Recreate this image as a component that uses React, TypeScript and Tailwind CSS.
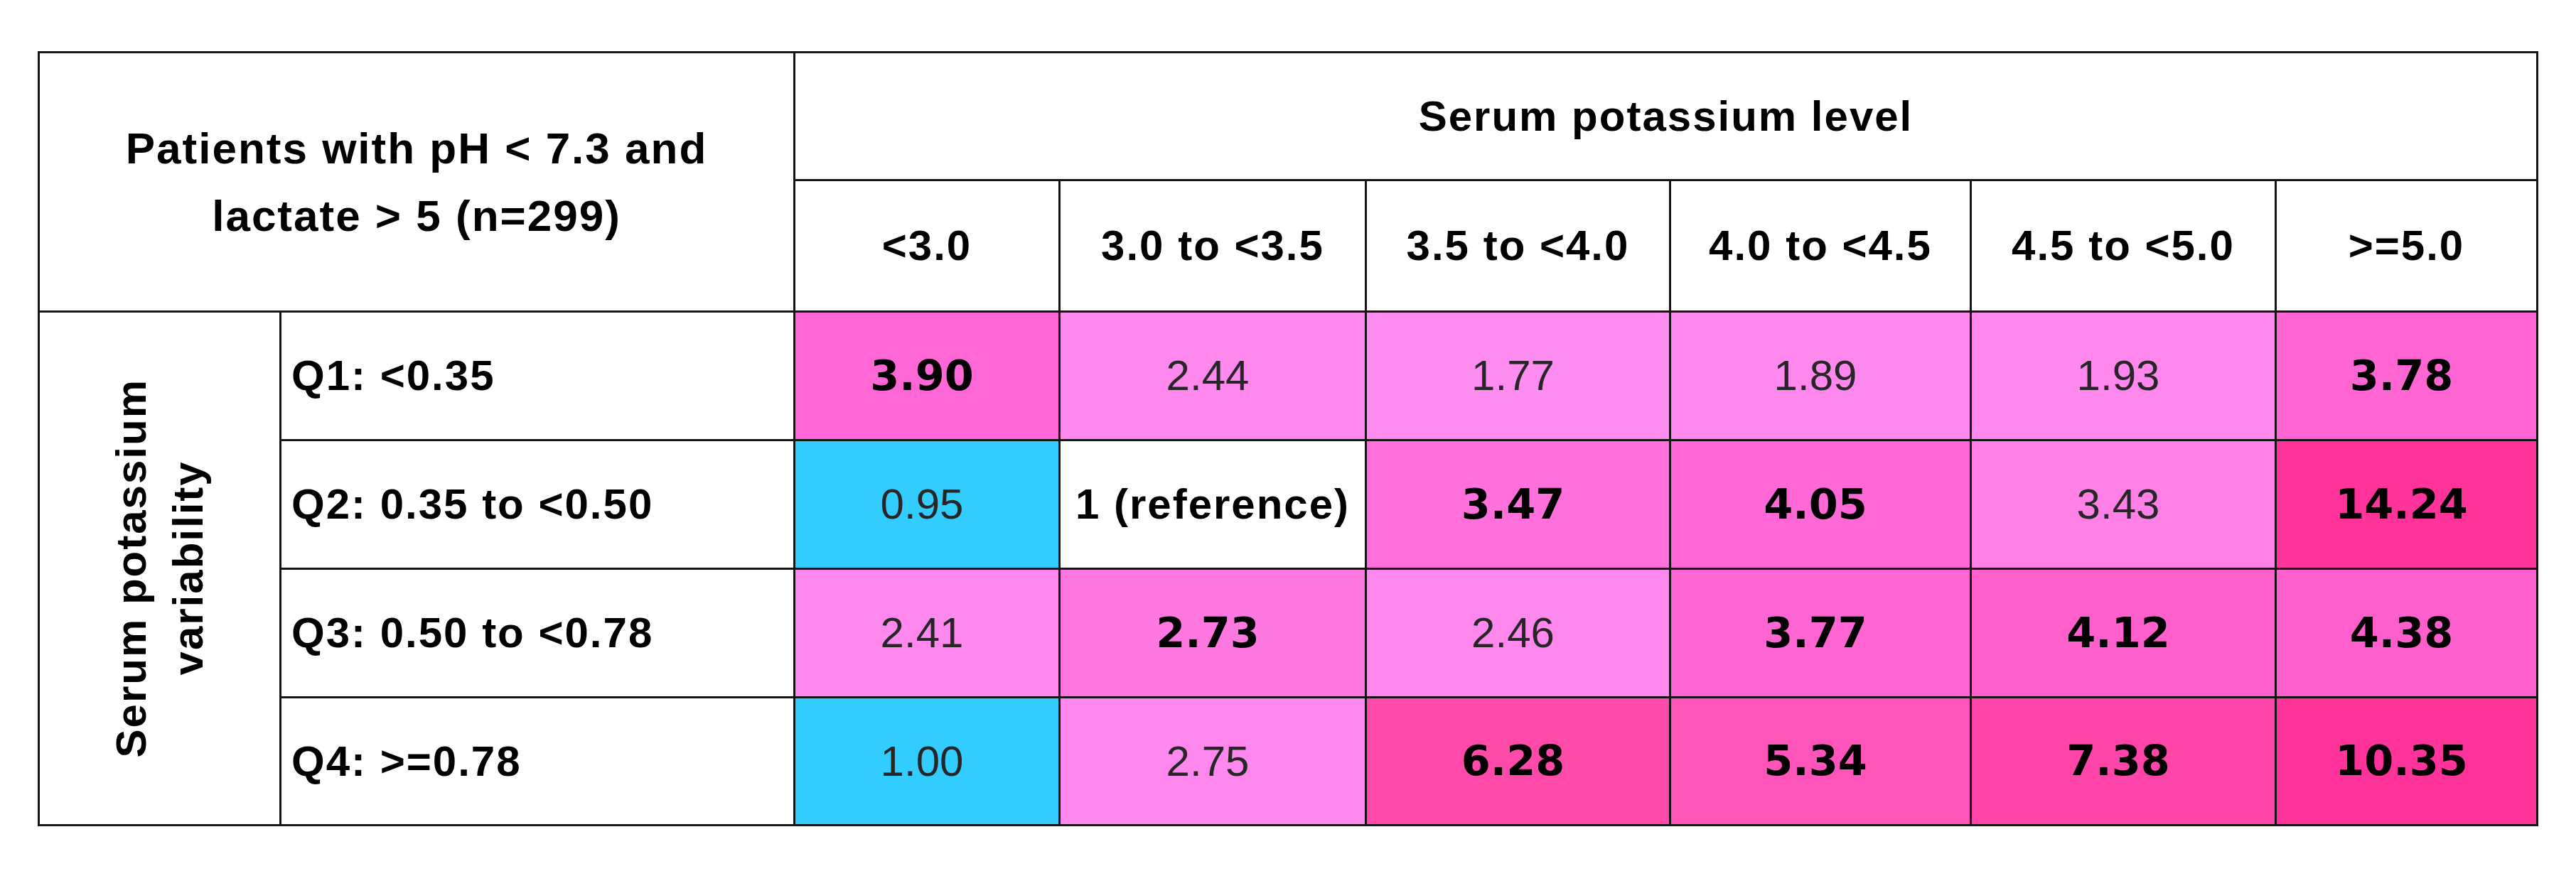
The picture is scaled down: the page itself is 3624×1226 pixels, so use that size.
/**
 * Odds ratio heat table: serum potassium level vs. potassium variability.
 */

type Cell = {
  value: string;
  bg: string;
  bold: boolean;
};

const levels = ["<3.0", "3.0 to <3.5", "3.5 to <4.0", "4.0 to <4.5", "4.5 to <5.0", ">=5.0"];

const rows: { label: string; cells: Cell[] }[] = [
  {
    label: "Q1: <0.35",
    cells: [
      { value: "3.90", bg: "bg-[#ff66d6]", bold: true },
      { value: "2.44", bg: "bg-[#ff88ee]", bold: false },
      { value: "1.77", bg: "bg-[#ff8cf0]", bold: false },
      { value: "1.89", bg: "bg-[#ff88ee]", bold: false },
      { value: "1.93", bg: "bg-[#ff88ee]", bold: false },
      { value: "3.78", bg: "bg-[#ff66d4]", bold: true },
    ],
  },
  {
    label: "Q2: 0.35 to <0.50",
    cells: [
      { value: "0.95", bg: "bg-[#33ccff]", bold: false },
      { value: "1 (reference)", bg: "bg-white", bold: true },
      { value: "3.47", bg: "bg-[#ff70dc]", bold: true },
      { value: "4.05", bg: "bg-[#ff68d6]", bold: true },
      { value: "3.43", bg: "bg-[#ff80e6]", bold: false },
      { value: "14.24", bg: "bg-[#ff3399]", bold: true },
    ],
  },
  {
    label: "Q3: 0.50 to <0.78",
    cells: [
      { value: "2.41", bg: "bg-[#ff88ee]", bold: false },
      { value: "2.73", bg: "bg-[#ff78e2]", bold: true },
      { value: "2.46", bg: "bg-[#ff88ee]", bold: false },
      { value: "3.77", bg: "bg-[#ff66d4]", bold: true },
      { value: "4.12", bg: "bg-[#ff60cc]", bold: true },
      { value: "4.38", bg: "bg-[#ff5fcc]", bold: true },
    ],
  },
  {
    label: "Q4: >=0.78",
    cells: [
      { value: "1.00", bg: "bg-[#33ccff]", bold: false },
      { value: "2.75", bg: "bg-[#ff88ee]", bold: false },
      { value: "6.28", bg: "bg-[#ff4aaa]", bold: true },
      { value: "5.34", bg: "bg-[#ff55bb]", bold: true },
      { value: "7.38", bg: "bg-[#ff44aa]", bold: true },
      { value: "10.35", bg: "bg-[#ff3399]", bold: true },
    ],
  },
];

const head = "font-['Liberation_Sans',Arial,sans-serif] font-bold text-[60px] tracking-[2px] text-black";

export default function App() {
  return (
    <div className="h-[1226px] w-[3624px] bg-white pl-[53px] pt-[72px]">
      <div className="grid h-[1091px] w-[3518px] grid-cols-[337px_720px_370px_428px_425px_420px_426px_365px] grid-rows-[177px_182px_178px_178px_178px_177px] gap-[3px] bg-[#151515] p-[3px]">
        <div className={`col-span-2 row-span-2 flex items-center justify-center bg-white text-center leading-[95px] ${head} text-[62px]`}>
          <span>
            Patients with pH &lt; 7.3 and
            <br />
            lactate &gt; 5 (n=299)
          </span>
        </div>
        <div className={`col-span-6 flex items-center justify-center bg-white ${head}`}>
          Serum potassium level
        </div>

        {levels.map((level) => (
          <div key={level} className={`flex items-center justify-center bg-white ${head}`}>
            {level}
          </div>
        ))}

        <div className="row-span-4 flex items-center justify-center bg-white">
          <span className={`rotate-180 text-center leading-[80px] [writing-mode:vertical-rl] ${head}`}>
            Serum potassium
            <br />
            variability
          </span>
        </div>

        {rows.map((row) => (
          <RowCells key={row.label} label={row.label} cells={row.cells} />
        ))}
      </div>
    </div>
  );
}

function RowCells({ label, cells }: { label: string; cells: Cell[] }) {
  return (
    <>
      <div className={`flex items-center bg-white pl-[14px] ${head}`}>{label}</div>
      {cells.map((cell, i) => (
        <div key={i} className={`flex items-center justify-center pr-[14px] ${cell.bg}`}>
          {cell.value === "1 (reference)" ? (
            <span className={`pl-[14px] ${head}`}>{cell.value}</span>
          ) : cell.bold ? (
            <span className="font-['DejaVu_Sans',sans-serif] text-[59px] font-bold text-black">{cell.value}</span>
          ) : (
            <span className="font-['Liberation_Sans',Arial,sans-serif] text-[60px] font-normal text-[#262626]">
              {cell.value}
            </span>
          )}
        </div>
      ))}
    </>
  );
}
